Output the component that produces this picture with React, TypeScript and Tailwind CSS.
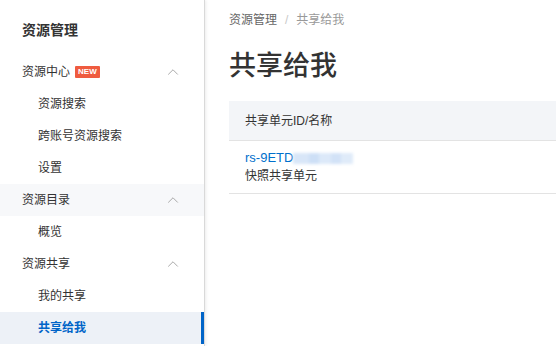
import { ChevronUp } from 'lucide-react'

const font = { fontFamily: '"Liberation Sans", "Noto Sans CJK SC", sans-serif' }

interface Item {
  label: string
  children: string[]
  badge?: boolean
}

const MENU: Item[] = [
  { label: '资源中心', badge: true, children: ['资源搜索', '跨账号资源搜索', '设置'] },
  { label: '资源目录', children: ['概览'] },
  { label: '资源共享', children: ['我的共享', '共享给我'] },
]

const ACTIVE = '共享给我'

function Sidebar() {
  return (
    <aside className="w-[205px] shrink-0 bg-white border-r border-[#d9d9d9] shadow-[1px_0_3px_rgba(0,0,0,0.08)] z-10">
      <div className="h-[56px] pl-[22px] pt-[20px] text-[14px] font-bold text-[#333] leading-[20px]">资源管理</div>
      {MENU.map((g) => (
        <div key={g.label}>
          <div className={`h-8 flex items-center pl-[22px] pr-[22px] text-[12px] text-[#333] ${g.label === '资源目录' ? 'bg-[#f7f8fa]' : ''}`}>
            <span>{g.label}</span>
            {g.badge && (
              <span className="ml-[5px] h-[12px] px-[3px] bg-[#ef5b3f] text-white text-[8px] font-bold leading-[12px] rounded-[1px]">NEW</span>
            )}
            <ChevronUp className="ml-auto w-[18px] h-[18px] text-[#a0a0a0]" strokeWidth={1.2} />
          </div>
          {g.children.map((c) =>
            c === ACTIVE ? (
              <div key={c} className="h-8 flex items-center pl-[38px] text-[12px] font-bold text-[#0064c8] bg-[#edf1f7] border-r-[3px] border-[#0064c8]">
                {c}
              </div>
            ) : (
              <div key={c} className="h-8 flex items-center pl-[38px] text-[12px] text-[#333]">
                {c}
              </div>
            )
          )}
        </div>
      ))}
    </aside>
  )
}

export default function App() {
  return (
    <div className="w-[556px] h-[346px] flex bg-white overflow-hidden" style={font}>
      <Sidebar />
      <main className="flex-1 pl-[24px] min-w-0">
        <div className="h-[40px] text-[12px] leading-[18px] flex items-center">
          <span className="text-[#666]">资源管理</span>
          <span className="mx-[8px] text-[#c8c8c8]">/</span>
          <span className="text-[#999]">共享给我</span>
        </div>
        <h1 className="mt-[6px] text-[27px] font-medium text-[#333] leading-[40px]">共享给我</h1>
        <div className="mt-[15px] mr-[-20px]">
          <div className="h-[40px] bg-[#f3f5f8] border-b border-[#e3e3e3] flex items-center pl-[16px] text-[12px] text-[#333]">
            共享单元ID/名称
          </div>
          <div className="h-[53px] border-b border-[#e3e3e3] pl-[16px] pt-[8px] text-[12px] leading-[18px]">
            <div className="flex items-center">
              <span className="text-[#0070cc] text-[13px]">rs-9ETD</span>
              <span className="flex items-center blur-[1.5px]">
                <span className="w-[16px] h-[11px] bg-[#d8e6f8]" />
                <span className="w-[10px] h-[11px] bg-[#cddff6]" />
                <span className="w-[12px] h-[11px] bg-[#dce9f9]" />
                <span className="w-[10px] h-[11px] bg-[#d2e2f7]" />
                <span className="w-[12px] h-[11px] bg-[#dfebf9]" />
              </span>
            </div>
            <div className="text-[#333]">快照共享单元</div>
          </div>
        </div>
      </main>
    </div>
  )
}
